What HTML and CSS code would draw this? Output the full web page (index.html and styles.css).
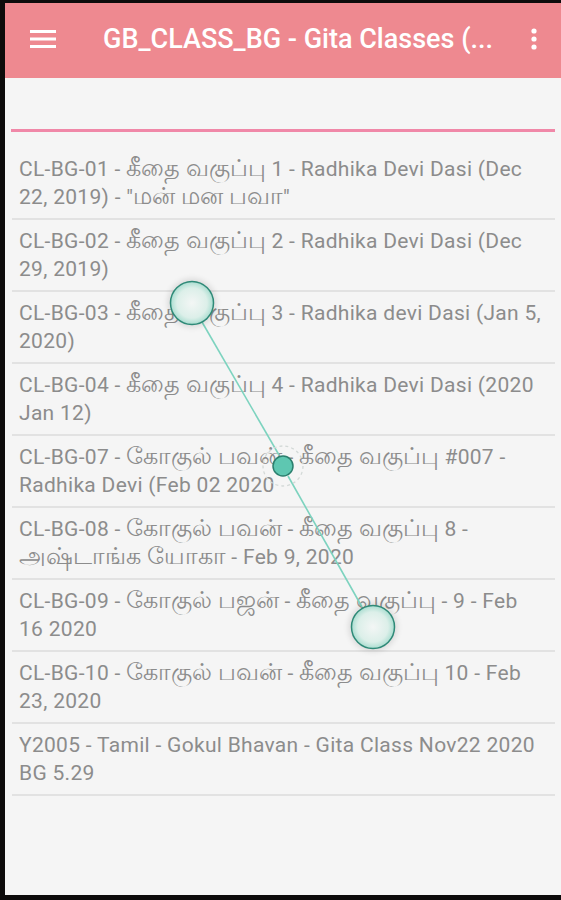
FILE: index.html
```html
<!DOCTYPE html>
<html lang="en">
<head>
  <meta charset="UTF-8">
  <meta name="viewport" content="width=device-width, initial-scale=1.0">
  <title>GB_CLASS_BG - Gita Classes</title>
  <link rel="stylesheet" href="styles.css">
</head>
<body>
  <div class="screen">
    <header class="appbar">
      <button class="icon-btn menu-btn" aria-label="Menu">
        <svg viewBox="0 0 26 18" width="26" height="18">
          <rect x="0" y="0" width="26" height="3" fill="#fff"/>
          <rect x="0" y="7.5" width="26" height="3" fill="#fff"/>
          <rect x="0" y="15" width="26" height="3" fill="#fff"/>
        </svg>
      </button>
      <div class="title">GB_CLASS_BG - Gita Classes (...</div>
      <button class="icon-btn more-btn" aria-label="More">
        <svg viewBox="0 0 6 22" width="6" height="22">
          <circle cx="3" cy="3" r="2.6" fill="#fff"/>
          <circle cx="3" cy="11" r="2.6" fill="#fff"/>
          <circle cx="3" cy="19" r="2.6" fill="#fff"/>
        </svg>
      </button>
    </header>

    <div class="search">
      <input class="search-input" type="text" aria-label="Search">
    </div>

    <ul class="list">
      <li class="item">CL-BG-01 - <span class="ta">கீதை வகுப்பு</span> 1 - Radhika Devi Dasi (Dec 22, 2019) - "<span class="ta">மன் மன பவா</span>"</li>
      <li class="item">CL-BG-02 - <span class="ta">கீதை வகுப்பு</span> 2 - Radhika Devi Dasi (Dec 29, 2019)</li>
      <li class="item">CL-BG-03 - <span class="ta">கீதை வகுப்பு</span> 3 - Radhika devi Dasi (Jan 5, 2020)</li>
      <li class="item">CL-BG-04 - <span class="ta">கீதை வகுப்பு</span> 4 - Radhika Devi Dasi (2020 Jan 12)</li>
      <li class="item">CL-BG-07 - <span class="ta">கோகுல் பவன்</span> - <span class="ta">கீதை வகுப்பு</span> #007 - Radhika Devi (Feb 02 2020</li>
      <li class="item">CL-BG-08 - <span class="ta">கோகுல் பவன்</span> - <span class="ta">கீதை வகுப்பு</span> 8 - <span class="ta">அஷ்டாங்க யோகா</span> - Feb 9, 2020</li>
      <li class="item">CL-BG-09 - <span class="ta">கோகுல் பஜன்</span> - <span class="ta">கீதை வகுப்பு</span> - 9 - Feb<br>16 2020</li>
      <li class="item">CL-BG-10 - <span class="ta">கோகுல் பவன்</span> - <span class="ta">கீதை வகுப்பு</span> 10 - Feb 23, 2020</li>
      <li class="item">Y2005 - Tamil - Gokul Bhavan - Gita Class Nov22 2020 BG 5.29</li>
    </ul>
  </div>

  <!-- touch trail drawn over the list -->
  <svg class="touches" viewBox="0 0 561 900" width="561" height="900">
    <defs>
      <radialGradient id="touchFill" cx="50%" cy="50%" r="50%">
        <stop offset="0%" stop-color="#f3f6f5"/>
        <stop offset="70%" stop-color="#dcefe9"/>
        <stop offset="100%" stop-color="#a9ddd0"/>
      </radialGradient>
      <filter id="glow" x="-50%" y="-50%" width="200%" height="200%">
        <feGaussianBlur stdDeviation="3"/>
      </filter>
    </defs>
    <line x1="202" y1="322" x2="279" y2="455" stroke="#7dd3bf" stroke-width="1.6"/>
    <line x1="288" y1="476" x2="362" y2="607" stroke="#7dd3bf" stroke-width="1.6"/>
    <circle cx="283" cy="466" r="20" fill="none" stroke="#d3d9d7" stroke-width="1.3" stroke-dasharray="3 3"/>
    <circle cx="192" cy="303" r="24" fill="#000" opacity="0.12" filter="url(#glow)"/>
    <circle cx="192" cy="303" r="21.5" fill="url(#touchFill)" stroke="#2f8a78" stroke-width="1.5"/>
    <circle cx="373" cy="627" r="24" fill="#000" opacity="0.12" filter="url(#glow)"/>
    <circle cx="373" cy="627" r="21.5" fill="url(#touchFill)" stroke="#2f8a78" stroke-width="1.5"/>
    <circle cx="283" cy="466" r="10" fill="#5ec7b1" stroke="#2b7f6e" stroke-width="1.5"/>
  </svg>
</body>
</html>
```

FILE: styles.css
```css
body {
  margin: 0;
  padding: 3px 0 5px 5px;
  background-color: #0d0b0b;
  font-family: Roboto, "Noto Sans", sans-serif;
  position: relative;
}

.screen {
  height: 892px;
  background-color: #f5f5f5;
  display: flex;
  flex-direction: column;
  overflow: hidden;
}

.appbar {
  height: 75px;
  flex-shrink: 0;
  display: flex;
  align-items: center;
  background-color: #ee8990;
  color: #ffffff;
}

.icon-btn {
  background: none;
  border: none;
  padding: 0;
  display: flex;
  align-items: center;
  justify-content: center;
}

.menu-btn {
  margin-left: 25px;
  margin-top: -3px;
}

.title {
  margin-left: 47px;
  flex: 1;
  font-size: 27px;
  font-weight: 500;
  white-space: nowrap;
  overflow: hidden;
  margin-top: -3px;
}

.more-btn {
  margin-right: 24px;
  margin-top: -3px;
}

.search {
  margin: 0 6px;
  height: 51px;
  border-bottom: 3px solid #f088a8;
}

.search-input {
  width: 100%;
  height: 100%;
  border: none;
  background: transparent;
  outline: none;
}

.list {
  list-style: none;
  margin: 16px 6px 0 7px;
  padding: 0;
}

.item {
  padding: 7px 6px 7px 7px;
  font-size: 21px;
  letter-spacing: 0.3px;
  line-height: 28px;
  color: #8c8c8c;
  border-bottom: 2px solid #e2e2e2;
}

.ta {
  font-size: 1.12em;
  letter-spacing: 0;
  line-height: 0;
}

.touches {
  position: absolute;
  top: 0;
  left: 0;
  pointer-events: none;
}
```
